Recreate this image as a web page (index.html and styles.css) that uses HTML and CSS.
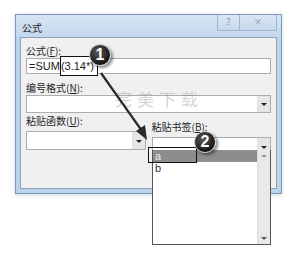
FILE: index.html
```html
<!DOCTYPE html>
<html lang="zh">
<head>
    <meta charset="UTF-8">
    <title>公式</title>
    <link rel="stylesheet" href="styles.css">
</head>
<body>
    <div class="dialog">
        <div class="titlebar">
            <span class="title">公式</span>
            <div class="caption-btns">
                <span class="cbtn">?</span>
                <span class="cbtn close">×</span>
            </div>
        </div>
        <div class="client">
            <div class="field">
                <label>公式(<u>F</u>):</label>
                <div class="textbox">=SUM<span class="mark">(3.14*)</span></div>
            </div>
            <div class="field">
                <label>编号格式(<u>N</u>):</label>
                <div class="combo"><span class="combo-text"></span><span class="drop-btn"></span></div>
            </div>
            <div class="pair">
                <div class="field">
                    <label>粘贴函数(<u>U</u>):</label>
                    <div class="combo"><span class="combo-text"></span><span class="drop-btn"></span></div>
                </div>
                <div class="field">
                    <label>粘贴书签(<u>B</u>):</label>
                    <div class="combo"><span class="combo-text"></span><span class="drop-btn"></span></div>
                </div>
            </div>
        </div>
    </div>

    <!-- callouts drawn over the dialog -->
    <div class="watermark">完美下载</div>

    <div class="droplist">
        <div class="items">
            <div class="item selected">a</div>
            <div class="item">b</div>
        </div>
        <div class="scrollbar">
            <span class="sarrow up"></span>
            <span class="sarrow down"></span>
        </div>
    </div>
    <div class="item-mark"></div>

    <svg class="arrow" width="294" height="258" viewBox="0 0 294 258">
        <line x1="101" y1="73" x2="142" y2="131" stroke="#2b2b2b" stroke-width="2.2"/>
        <polygon points="147,140 136,131 145,125" fill="#2b2b2b"/>
    </svg>

    <div class="badge badge-1">1</div>
    <div class="badge badge-2">2</div>
</body>
</html>
```

FILE: styles.css
```css
body {
    margin: 0;
    background: #fff;
    font-family: "Noto Sans CJK SC", "Liberation Sans", sans-serif;
    font-size: 10px;
    color: #1e1e1e;
    width: 294px;
    height: 258px;
    position: relative;
    overflow: hidden;
}
.dialog {
    margin: 14px 0 0 15px;
    width: 265px;
    height: 178px;
    border: 1px solid #7f98b6;
    background: #bcd3ec;
    box-shadow: 0 1px 4px rgba(120,140,170,0.35);
    display: flex;
    flex-direction: column;
}
.titlebar {
    height: 22px;
    display: flex;
    align-items: flex-start;
    justify-content: space-between;
    background: linear-gradient(#d6e5f5, #c3d7ee);
}
.title {
    font-size: 10px;
    margin: 5px 0 0 6px;
    color: #222;
}
.caption-btns {
    display: flex;
    margin-right: 4px;
    border: 1px solid #9fb6d0;
    border-top: none;
    height: 15px;
}
.cbtn {
    width: 21px;
    font-size: 9px;
    line-height: 14px;
    text-align: center;
    color: #7d8ea3;
    background: linear-gradient(#d9e6f3, #c6d8ec);
}
.cbtn.close {
    width: 36px;
    border-left: 1px solid #9fb6d0;
}
.client {
    margin: 0 4px 4px 4px;
    flex: 1;
    background: #f0f0f0;
    border: 1px solid #8ea4bd;
    padding: 5px 5px 0 5px;
}
.field label {
    display: block;
    line-height: 15px;
    height: 15px;
}
.field + .field {
    margin-top: 6px;
}
.pair {
    margin-top: 0;
    display: flex;
    gap: 6px;
}
.pair .field {
    flex: 1;
}
.pair .field label {
    margin-bottom: 3px;
}
.textbox {
    height: 14px;
    border: 1px solid #abadb3;
    background: #fff;
    font-family: "Liberation Sans", sans-serif;
    font-size: 11px;
    line-height: 14px;
    padding-left: 2px;
    color: #222;
}
.mark {
    border: 1.5px solid #111;
    padding: 3px 3px 3px 0;
    background: #fff;
}
.combo {
    height: 16px;
    border: 1px solid #abadb3;
    background: #fff;
    display: flex;
    justify-content: flex-end;
}
.pair .combo {
    height: 17px;
}
.drop-btn {
    width: 12px;
    background: #e6e6e6;
    border-left: 1px solid #e0e0e0;
    position: relative;
}
.drop-btn::after {
    content: "";
    position: absolute;
    left: 3px;
    top: 50%;
    margin-top: -1px;
    border-left: 3px solid transparent;
    border-right: 3px solid transparent;
    border-top: 3px solid #222;
}
.watermark {
    position: absolute;
    left: 115px;
    top: 86px;
    font-size: 17px;
    letter-spacing: 5px;
    color: rgba(120,120,120,0.33);
    font-family: "Noto Sans CJK SC", sans-serif;
}
.item-mark {
    position: absolute;
    border: 1.5px solid #111;
    left: 148px;
    top: 147px;
    width: 47px;
    height: 14px;
}
.droplist {
    position: absolute;
    left: 152px;
    top: 150px;
    width: 117px;
    height: 94px;
    border: 1px solid #555;
    border-top: none;
    background: #fff;
    display: flex;
}
.items {
    flex: 1;
    font-family: "Liberation Sans", sans-serif;
    font-size: 11px;
}
.item {
    height: 12px;
    line-height: 12px;
    padding-left: 2px;
    color: #333;
}
.item.selected {
    background: #8d8d8d;
    color: #eee;
}
.scrollbar {
    width: 12px;
    background: #e9e9e9;
    border-left: 1px solid #dcdcdc;
    display: flex;
    flex-direction: column;
    justify-content: space-between;
    align-items: center;
    padding: 4px 0;
}
.sarrow {
    width: 0;
    height: 0;
    border-left: 3px solid transparent;
    border-right: 3px solid transparent;
}
.sarrow.up {
    border-bottom: 3px solid #999;
}
.sarrow.down {
    border-top: 3px solid #555;
}
.arrow {
    position: absolute;
    left: 0;
    top: 0;
}
.badge {
    position: absolute;
    width: 20px;
    height: 20px;
    border-radius: 50%;
    background: radial-gradient(circle at 40% 35%, #5a5a5a, #151515 70%);
    border: 1.5px solid #c8c8c8;
    box-shadow: 2px 2px 3px rgba(0,0,0,0.45);
    color: #fff;
    font-family: "Liberation Sans", sans-serif;
    font-weight: bold;
    font-size: 16px;
    line-height: 20px;
    text-align: center;
}
.badge-1 {
    left: 89px;
    top: 44px;
}
.badge-2 {
    left: 194px;
    top: 131px;
}
```
